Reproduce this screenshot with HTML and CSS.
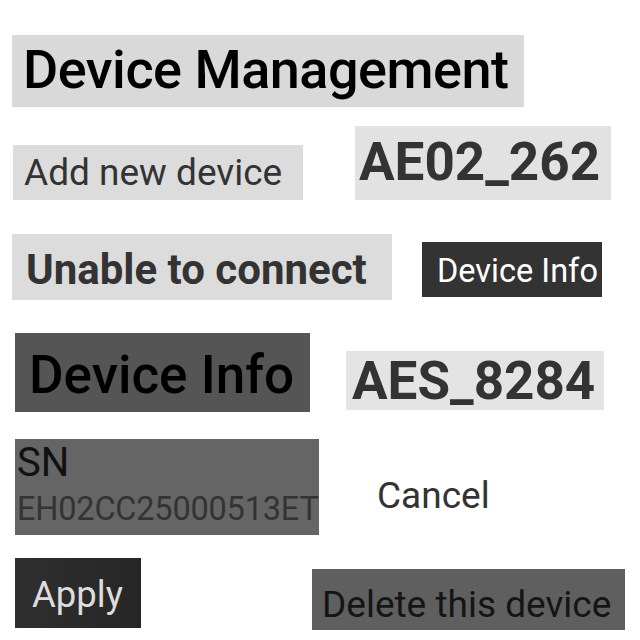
FILE: index.html
```html
<!DOCTYPE html>
<html lang="en">
<head>
<meta charset="utf-8">
<title>Device Management</title>
<link rel="stylesheet" href="styles.css">
</head>
<body>
<main class="screen">
  <div class="row row1">
    <h1 class="title">Device Management</h1>
  </div>
  <div class="row row2">
    <button class="add">Add new device</button>
    <div class="name1">AE02_262</div>
  </div>
  <div class="row row3">
    <div class="status">Unable to connect</div>
    <button class="info-btn">Device Info</button>
  </div>
  <div class="row row4">
    <h2 class="info-title">Device Info</h2>
    <div class="name2">AES_8284</div>
  </div>
  <div class="row row5">
    <div class="sn">
      <span class="sn-label">SN</span>
      <span class="sn-value">EH02CC25000513ET</span>
    </div>
    <button class="cancel">Cancel</button>
  </div>
  <div class="row row6">
    <button class="apply">Apply</button>
    <button class="delete">Delete this device</button>
  </div>
</main>
</body>
</html>
```
FILE: styles.css
```css
* { box-sizing: border-box; }
html, body { margin: 0; padding: 0; background: #ffffff; }
body { font-family: Roboto, "Noto Sans", Arial, sans-serif; }
h1, h2 { margin: 0; font-weight: inherit; }
button { font-family: inherit; border: 0; margin: 0; cursor: pointer; }

.screen { display: flex; flex-direction: column; width: 640px; height: 640px; }
.row { display: flex; }

.row1 { margin-top: 35px; }
.title {
  margin-left: 12px; width: 512px; height: 72px;
  background: #d9d9d9; color: #000;
  font-size: 54px; font-weight: 500; line-height: 1; letter-spacing: -0.5px;
  display: flex; align-items: center; padding: 0 0 3px 11px;
}

.row2 { margin-top: 19px; align-items: flex-end; }
.add {
  margin-left: 13px; width: 290px; height: 55px;
  background: #dcdcdc; color: #333;
  font-size: 37px; line-height: 1; text-align: left;
  padding: 0 0 0 11px;
}
.name1 {
  margin-left: 52px; width: 256px; height: 74px;
  background: #e2e2e2; color: #333;
  font-size: 53px; font-weight: 700; line-height: 1;
  display: flex; align-items: center; padding: 0 0 2px 4px;
}

.row3 { margin-top: 34px; align-items: flex-start; }
.status {
  margin-left: 12px; width: 380px; height: 66px;
  background: #dcdcdc; color: #333;
  font-size: 42px; font-weight: 700; line-height: 1;
  display: flex; align-items: center; padding: 5px 0 0 14px;
}
.info-btn {
  margin: 8px 0 0 30px; width: 180px; height: 55px;
  background: #333333; color: #fff;
  font-size: 32.5px; line-height: 1; text-align: left;
  padding: 4px 0 0 15px;
}

.row4 { margin-top: 33px; align-items: flex-start; }
.info-title {
  margin-left: 15px; width: 295px; height: 79px;
  background: #555555; color: #000;
  font-size: 53px; font-weight: 500; line-height: 1;
  display: flex; align-items: center; padding: 6px 0 0 14px;
}
.name2 {
  margin: 18px 0 0 36px; width: 258px; height: 59px;
  background: #e4e4e4; color: #333;
  font-size: 53px; font-weight: 700; line-height: 1;
  display: flex; align-items: center; padding: 2px 0 0 6px;
}

.row5 { margin-top: 27px; align-items: center; }
.sn {
  margin-left: 15px; width: 304px; height: 96px;
  background: #656565;
  display: flex; flex-direction: column; padding: 1px 0 0 2px;
}
.sn-label { font-size: 40px; line-height: 46px; color: #111; }
.sn-value { font-size: 32.5px; line-height: 46px; color: #333; letter-spacing: -0.2px; }
.cancel {
  margin: 16px 0 0 58px; background: transparent; color: #333;
  font-size: 37px; line-height: 1; padding: 0;
}

.row6 { margin-top: 23px; align-items: flex-start; }
.apply {
  margin-left: 15px; width: 126px; height: 70px;
  background: linear-gradient(90deg, #2f2f2f, #262626); color: #ddd;
  font-size: 36.5px; line-height: 1; text-align: left;
  padding: 4px 0 0 17px;
}
.delete {
  margin: 11px 0 0 171px; width: 313px; height: 61px;
  background: #5f5f5f; color: #151515;
  font-size: 37px; line-height: 1; text-align: left;
  padding: 10px 0 0 10px;
}
```
